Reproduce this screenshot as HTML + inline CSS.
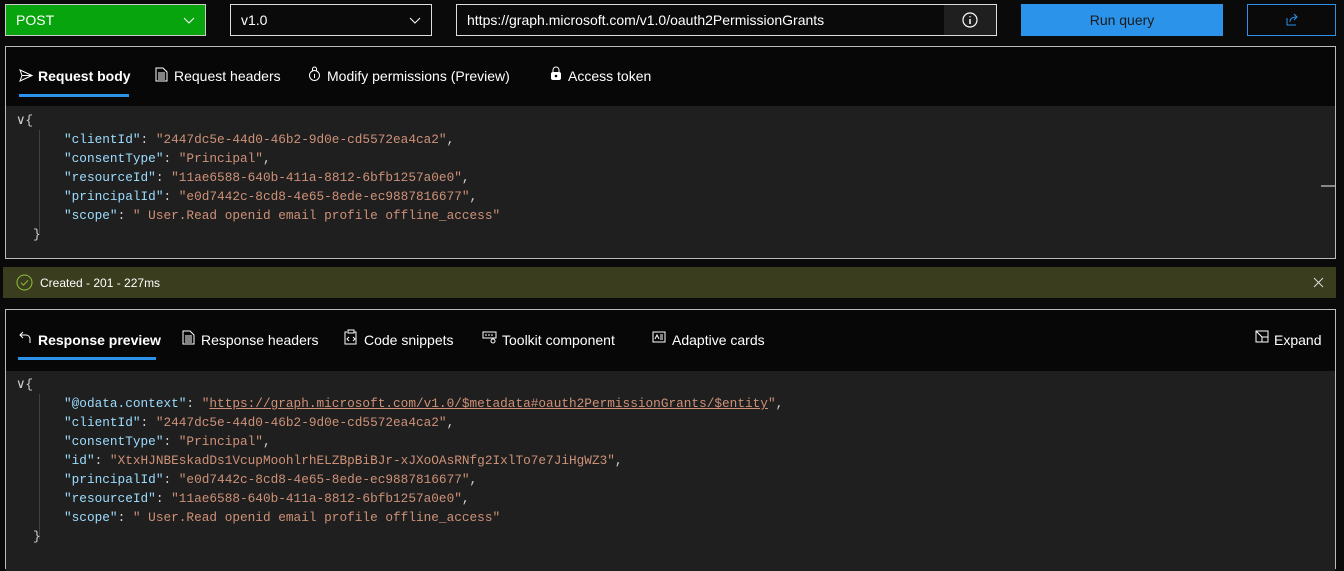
<!DOCTYPE html>
<html><head><meta charset="utf-8"><style>
*{box-sizing:border-box;margin:0;padding:0}
body{width:1344px;height:558px;background:#0a0a0a;font-family:"Liberation Sans",sans-serif;color:#fff;position:relative;overflow:hidden;font-size:14px}
.abs{position:absolute}
.sel{position:absolute;top:4px;height:32px;border:1px solid #ddd;padding:0 10px;line-height:30px;font-size:14px}
.panel{position:absolute;left:5px;width:1331px;border:1px solid #bbb;background:#070707}
.tab{position:absolute;font-size:14px;white-space:nowrap}
.ed{position:absolute;left:0;right:0;background:#1f1f1f;font-family:"Liberation Mono",monospace;font-size:12.75px}
.ln{position:absolute;white-space:pre;height:19px;line-height:19px}
.k{color:#9cdcfe}.s{color:#ce9178}.p{color:#d4d4d4}
.u{text-decoration:underline}
.guide{position:absolute;left:33px;width:1px;background:#404040}
</style></head><body>
<div class="sel" style="left:5px;width:201px;background:#07a40d;border-color:#ccc">POST<span class="abs" style="right:10px;top:0">
<svg width="12" height="8" viewBox="0 0 12 8" style="vertical-align:middle"><path d="M1 1l5 5 5-5" stroke="#fff" fill="none"/></svg></span></div>
<div class="sel" style="left:230px;width:202px">v1.0<span class="abs" style="right:10px;top:0"><svg width="12" height="8" viewBox="0 0 12 8" style="vertical-align:middle"><path d="M1 1l5 5 5-5" stroke="#fff" fill="none"/></svg></span></div>
<div class="sel" style="left:456px;width:541px">https://graph.microsoft.com/v1.0/oauth2PermissionGrants
<div class="abs" style="right:0;top:0;width:52px;height:30px;background:#1f1f1f;text-align:center"><svg width="16" height="16" viewBox="0 0 16 16" style="margin-top:7px"><circle cx="8" cy="8" r="7" stroke="#fff" fill="none" stroke-width="1.2"/><path d="M8 7v5M8 4.2v1" stroke="#fff" stroke-width="1.5"/></svg></div></div>
<div class="abs" style="left:1021px;top:4px;width:202px;height:32px;background:#2b93ea;color:#1a1a1a;text-align:center;line-height:32px">Run query</div>
<div class="abs" style="left:1247px;top:4px;width:89px;height:32px;border:1px solid #2b93ea;text-align:center"><svg width="14" height="14" viewBox="0 0 14 14" style="margin-top:8px"><path d="M2 5v7h9M5 9c0-4 3-5 7-5M9 1l3 3-3 3" stroke="#2b93ea" fill="none"/></svg></div>

<div class="panel" style="top:46px;height:213px">
 <svg class="abs" style="left:13px;top:22px" width="14" height="13" viewBox="0 0 14 13"><path d="M1 1l12 5.5L1 12l2-5.5z M3 6.5h10" stroke="#fff" fill="none"/></svg>
 <div class="tab" style="left:32px;top:21px;font-weight:bold">Request body</div>
 <div class="abs" style="left:13px;top:47px;width:110px;height:3px;background:#2b93ea"></div>
 <svg class="abs" style="left:149px;top:20px" width="13" height="15" viewBox="0 0 13 15"><path d="M1 1h7l4 4v9H1z M3 6h7M3 8h7M3 10h7M3 12h7" stroke="#fff" fill="none"/></svg>
 <div class="tab" style="left:168px;top:21px">Request headers</div>
 <svg class="abs" style="left:302px;top:19px" width="13" height="16" viewBox="0 0 13 16"><circle cx="6.5" cy="9.5" r="5" stroke="#fff" fill="none"/><path d="M4.5 5V3a2 2 0 014 0v2M6.5 8v4" stroke="#fff" fill="none"/></svg>
 <div class="tab" style="left:321px;top:21px">Modify permissions (Preview)</div>
 <svg class="abs" style="left:544px;top:19px" width="12" height="15" viewBox="0 0 12 15"><path d="M3 6V4a3 3 0 016 0v2" stroke="#fff" fill="none"/><rect x="1" y="6" width="10" height="8" rx="2" fill="#fff"/><circle cx="6" cy="10" r="1.3" fill="#000"/></svg>
 <div class="tab" style="left:562px;top:21px">Access token</div>
 <div class="ed" style="top:59px;height:152px">
  <div class="guide" style="top:24px;height:104px"></div>
  <div class="abs" style="right:0;top:79px;width:14px;height:2px;background:#888"></div>
  <div class="ln p" style="left:10px;top:5px">&#x2228;{</div>
  <div class="ln" style="left:58px;top:24px"><span class="k">"clientId"</span><span class="p">: </span><span class="s">"2447dc5e-44d0-46b2-9d0e-cd5572ea4ca2"</span><span class="p">,</span></div>
  <div class="ln" style="left:58px;top:43px"><span class="k">"consentType"</span><span class="p">: </span><span class="s">"Principal"</span><span class="p">,</span></div>
  <div class="ln" style="left:58px;top:62px"><span class="k">"resourceId"</span><span class="p">: </span><span class="s">"11ae6588-640b-411a-8812-6bfb1257a0e0"</span><span class="p">,</span></div>
  <div class="ln" style="left:58px;top:81px"><span class="k">"principalId"</span><span class="p">: </span><span class="s">"e0d7442c-8cd8-4e65-8ede-ec9887816677"</span><span class="p">,</span></div>
  <div class="ln" style="left:58px;top:100px"><span class="k">"scope"</span><span class="p">: </span><span class="s">" User.Read openid email profile offline_access"</span></div>
  <div class="ln p" style="left:27px;top:119px">}</div>
 </div>
</div>

<div class="abs" style="left:3px;top:267px;width:1333px;height:31px;background:#3a3d1e">
 <svg class="abs" style="left:13px;top:7px" width="17" height="17" viewBox="0 0 17 17"><circle cx="8.5" cy="8.5" r="7.5" stroke="#8fc43a" fill="none"/><path d="M5 8.7l2.5 2.5 4.5-5" stroke="#8fc43a" fill="none"/></svg>
 <div class="abs" style="left:37px;top:9px;font-size:12px">Created - 201 - 227ms</div>
 <svg class="abs" style="right:12px;top:10px" width="11" height="11" viewBox="0 0 11 11"><path d="M1 1l9 9M10 1l-9 9" stroke="#ddd"/></svg>
</div>

<div class="panel" style="top:309px;height:260px">
 <svg class="abs" style="left:13px;top:21px" width="13" height="13" viewBox="0 0 13 13"><path d="M4 1L1 4l3 3M1 4h6a4 4 0 014 4v4" stroke="#fff" fill="none"/></svg>
 <div class="tab" style="left:32px;top:22px;font-weight:bold">Response preview</div>
 <div class="abs" style="left:12px;top:47px;width:138px;height:3px;background:#2b93ea"></div>
 <svg class="abs" style="left:176px;top:20px" width="13" height="15" viewBox="0 0 13 15"><path d="M1 1h7l4 4v9H1z M3 6h7M3 8h7M3 10h7M3 12h7" stroke="#fff" fill="none"/></svg>
 <div class="tab" style="left:195px;top:22px">Response headers</div>
 <svg class="abs" style="left:338px;top:19px" width="14" height="16" viewBox="0 0 14 16"><path d="M3 3H1v12h11V3h-2M4 1h6v3H4z M5 8l-2 2 2 2M9 8l2 2-2 2" stroke="#fff" fill="none"/></svg>
 <div class="tab" style="left:358px;top:22px">Code snippets</div>
 <svg class="abs" style="left:476px;top:21px" width="15" height="13" viewBox="0 0 15 13"><path d="M1 1h13v6H1z M4 3v2M7 3v2M10 3v2" stroke="#fff" fill="none"/><circle cx="11" cy="10" r="2" stroke="#fff" fill="none"/></svg>
 <div class="tab" style="left:496px;top:22px">Toolkit component</div>
 <svg class="abs" style="left:646px;top:21px" width="14" height="12" viewBox="0 0 14 12"><path d="M1 1h12v10H1z M3 8l2-4 2 4M8 4h3M8 6h3M8 8h3" stroke="#fff" fill="none"/></svg>
 <div class="tab" style="left:666px;top:22px">Adaptive cards</div>
 <svg class="abs" style="left:1249px;top:20px" width="14" height="13" viewBox="0 0 14 13"><path d="M1 1h12v11H1z M1 1l6 6M7 7h6M7 7v5" stroke="#fff" fill="none"/></svg>
 <div class="tab" style="left:1268px;top:22px">Expand</div>
 <div class="ed" style="top:61px;height:200px">
  <div class="guide" style="top:23px;height:145px"></div>
  <div class="ln p" style="left:10px;top:4px">&#x2228;{</div>
  <div class="ln" style="left:58px;top:23px"><span class="k">"@odata.context"</span><span class="p">: </span><span class="s">"<span class="u">https://graph.microsoft.com/v1.0/$metadata#oauth2PermissionGrants/$entity</span>"</span><span class="p">,</span></div>
  <div class="ln" style="left:58px;top:42px"><span class="k">"clientId"</span><span class="p">: </span><span class="s">"2447dc5e-44d0-46b2-9d0e-cd5572ea4ca2"</span><span class="p">,</span></div>
  <div class="ln" style="left:58px;top:61px"><span class="k">"consentType"</span><span class="p">: </span><span class="s">"Principal"</span><span class="p">,</span></div>
  <div class="ln" style="left:58px;top:80px"><span class="k">"id"</span><span class="p">: </span><span class="s">"XtxHJNBEskadDs1VcupMoohlrhELZBpBiBJr-xJXoOAsRNfg2IxlTo7e7JiHgWZ3"</span><span class="p">,</span></div>
  <div class="ln" style="left:58px;top:99px"><span class="k">"principalId"</span><span class="p">: </span><span class="s">"e0d7442c-8cd8-4e65-8ede-ec9887816677"</span><span class="p">,</span></div>
  <div class="ln" style="left:58px;top:118px"><span class="k">"resourceId"</span><span class="p">: </span><span class="s">"11ae6588-640b-411a-8812-6bfb1257a0e0"</span><span class="p">,</span></div>
  <div class="ln" style="left:58px;top:137px"><span class="k">"scope"</span><span class="p">: </span><span class="s">" User.Read openid email profile offline_access"</span></div>
  <div class="ln p" style="left:27px;top:156px">}</div>
 </div>
</div>
</body></html>
